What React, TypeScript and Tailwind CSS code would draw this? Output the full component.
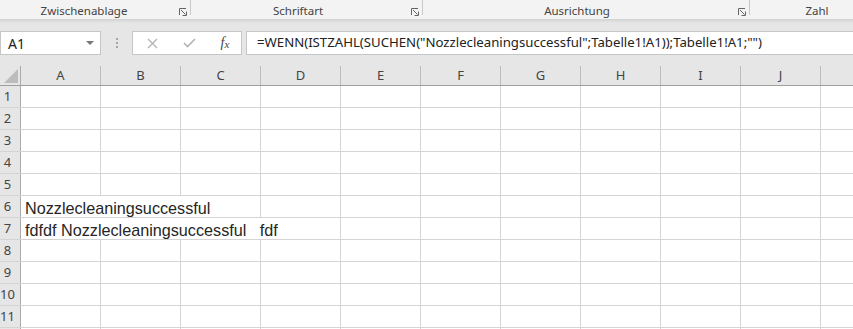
import React from "react";

const COLS = ["A", "B", "C", "D", "E", "F", "G", "H", "I", "J", ""];

function Launcher() {
  return (
    <svg width="8" height="8" viewBox="0 0 8 8" className="block">
      <path d="M0.5 7 V0.5 H7" fill="none" stroke="#666" strokeWidth="1" />
      <path d="M2 2 L6.5 6.5" fill="none" stroke="#666" strokeWidth="1" />
      <path d="M3.5 7.5 H7.5 V3.5" fill="none" stroke="#666" strokeWidth="1" />
    </svg>
  );
}

function Group({
  width,
  label,
  pr,
}: {
  width: string;
  label: string;
  pr: string;
}) {
  return (
    <div className={`flex h-full shrink-0 ${width}`}>
      <div className={`flex-1 flex justify-center pt-[4px] ${pr}`}>{label}</div>
      <div className="w-[14px] flex justify-center pt-[8px]">
        <Launcher />
      </div>
      <div className="w-px h-[15px] bg-[#c8c8c8]" />
    </div>
  );
}

function Row({ n, content }: { n: number | null; content?: { text: string; span: number } }) {
  const cells: React.ReactNode[] = [];
  let i = 0;
  if (content) {
    cells.push(
      <div
        key="c"
        className="shrink-0 h-full border-r border-[#d4d4d4] flex items-end pl-[4px] pb-[1px] whitespace-pre text-[16.2px] leading-[16px] text-[#262626] font-['Liberation_Sans',Arial,sans-serif]"
        style={{ width: content.span * 80 }}
      >
        {content.text}
      </div>
    );
    i = content.span;
  }
  for (; i < COLS.length; i++) {
    cells.push(
      <div key={i} className="w-[80px] shrink-0 h-full border-r border-[#d4d4d4]" />
    );
  }
  return (
    <div className="flex h-[22px] border-b border-[#d4d4d4]">
      <div className="w-[21px] shrink-0 h-full bg-[#e6e6e6] border-r border-[#ababab] flex items-center justify-center pr-[5px] text-[13px] text-[#444]">
        {n}
      </div>
      {cells}
    </div>
  );
}

export default function App() {
  const rows = Array.from({ length: 11 }, (_, k) => k + 1);
  return (
    <div className="w-[853px] h-[329px] overflow-hidden bg-white font-['Noto_Sans',sans-serif]">
      {/* Ribbon group labels */}
      <div className="h-[19px] bg-[#f3f3f3] flex text-[11.5px] leading-[14px] text-[#444] whitespace-nowrap">
        <Group width="w-[191px]" label="Zwischenablage" pr="pr-[8px]" />
        <Group width="w-[232px]" label="Schriftart" pr="pr-[3px]" />
        <Group width="w-[327px]" label="Ausrichtung" pr="pr-[4px]" />
        <div className="w-[100px] shrink-0 flex justify-center pt-[4px] pl-[34px]">Zahl</div>
      </div>
      <div className="h-[4px] bg-gradient-to-b from-[#d2d2d2] to-[#e6e6e6]" />
      {/* Formula bar */}
      <div className="bg-[#e6e6e6] pt-[8px] pb-[11px]">
        <div className="flex h-[24px]">
          <div className="w-[101px] shrink-0 border border-[#c6c6c6] bg-white flex items-center justify-between pl-[7px] pr-[6px] text-[14px] text-[#222]">
            <span>A1</span>
            <svg width="8" height="4" viewBox="0 0 8 4">
              <path d="M0 0 H8 L4 4 Z" fill="#777" />
            </svg>
          </div>
          <div className="w-[31px] shrink-0 flex flex-col items-center justify-center gap-[2px]">
            <div className="w-[2px] h-[2px] bg-[#a6a6a6]" />
            <div className="w-[2px] h-[2px] bg-[#a6a6a6]" />
            <div className="w-[2px] h-[2px] bg-[#a6a6a6]" />
          </div>
          <div className="w-[110px] shrink-0 border border-[#c6c6c6] bg-white flex items-center">
            <div className="w-[37px] flex justify-center pl-[2px]">
              <svg width="11" height="11" viewBox="0 0 11 11">
                <path d="M1 1 L10 10 M10 1 L1 10" stroke="#b3b3b3" strokeWidth="1.3" fill="none" />
              </svg>
            </div>
            <div className="w-[37px] flex justify-center pl-[2px]">
              <svg width="13" height="10" viewBox="0 0 13 10">
                <path d="M1 5 L4.5 8.5 L12 1" stroke="#b3b3b3" strokeWidth="1.6" fill="none" />
              </svg>
            </div>
            <div className="w-[34px] flex justify-center pl-[2px] font-['Liberation_Serif',serif] italic text-[#444] text-[14px] leading-none">
              <span>f</span>
              <span className="text-[11px] self-end">x</span>
            </div>
          </div>
          <div className="w-[4px] shrink-0" />
          <div className="flex-1 border border-[#c6c6c6] border-r-0 bg-white flex items-center pl-[10px] text-[13.2px] text-[#222] whitespace-nowrap">
            =WENN(ISTZAHL(SUCHEN("Nozzlecleaningsuccessful";Tabelle1!A1));Tabelle1!A1;"")
          </div>
        </div>
      </div>
      {/* Column header */}
      <div className="flex h-[20px] bg-[#e6e6e6] border-b border-[#9e9e9e]">
        <div className="w-[21px] shrink-0 h-full border-r border-[#ababab] flex items-end justify-end pr-[2px] pb-[2px]">
          <svg width="14" height="14" viewBox="0 0 14 14">
            <path d="M14 0 L14 14 L0 14 Z" fill="#bcbcbc" />
          </svg>
        </div>
        {COLS.map((c, i) => (
          <div
            key={i}
            className="w-[80px] shrink-0 h-full border-r border-[#bdbdbd] flex items-center justify-center text-[13px] text-[#444]"
          >
            {c}
          </div>
        ))}
      </div>
      {rows.map((n) => (
        <Row
          key={n}
          n={n}
          content={
            n === 6
              ? { text: "Nozzlecleaningsuccessful", span: 3 }
              : n === 7
              ? { text: "fdfdf Nozzlecleaningsuccessful   fdf", span: 4 }
              : undefined
          }
        />
      ))}
      <Row n={null} />
    </div>
  );
}
